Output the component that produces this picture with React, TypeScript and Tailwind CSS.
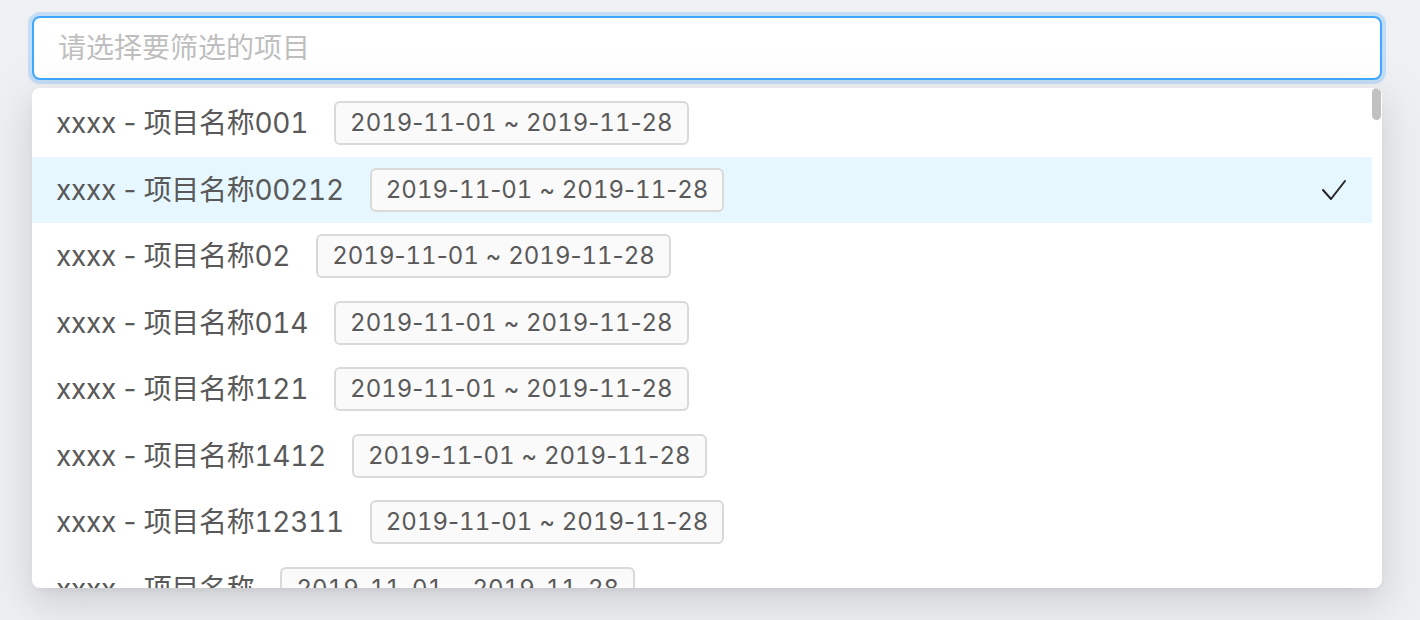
const items = [
  { name: "xxxx - 项目名称001", selected: false },
  { name: "xxxx - 项目名称00212", selected: true },
  { name: "xxxx - 项目名称02", selected: false },
  { name: "xxxx - 项目名称014", selected: false },
  { name: "xxxx - 项目名称121", selected: false },
  { name: "xxxx - 项目名称1412", selected: false },
  { name: "xxxx - 项目名称12311", selected: false },
  { name: "xxxx - 项目名称", selected: false },
];

const font = { fontFamily: 'Inter, "Noto Sans CJK SC", sans-serif' };

// digits in the shot are tabular, the rest is not
function Nums({ text }: { text: string }) {
  return (
    <span className="whitespace-pre">
      {text.split(/(\d+)/).map((part, i) =>
        /^\d+$/.test(part) ? (
          <span key={i} className="tabular-nums">{part}</span>
        ) : (
          <span key={i}>{part}</span>
        )
      )}
    </span>
  );
}

function CheckMark() {
  return (
    <svg width="26" height="22" viewBox="0 0 26 22" fill="none" className="ml-auto">
      <polyline
        points="2,11 10,20 24,2"
        stroke="#262626"
        strokeWidth="2"
        strokeLinecap="round"
        strokeLinejoin="round"
      />
    </svg>
  );
}

export default function App() {
  return (
    <div className="min-h-[620px] w-full bg-[#eff0f4] px-8 pt-4" style={font}>
      <div className="flex h-16 w-[1350px] items-center rounded-lg border-2 border-[#40a9ff] bg-white px-6 shadow-[0_0_0_4px_rgba(24,144,255,0.2)]">
        <span className="text-[28px] text-[#bfbfbf]">请选择要筛选的项目</span>
      </div>

      <div className="relative mt-2 h-[500px] w-[1350px] overflow-hidden rounded-lg bg-white shadow-[0_6px_12px_-8px_rgba(0,0,0,0.12),0_12px_32px_0_rgba(0,0,0,0.08),0_18px_56px_16px_rgba(0,0,0,0.05)]">
        <div className="pr-[10px] pt-[2px]">
          {items.map(it => (
            <div
              key={it.name}
              className={
                "flex h-[66.5px] items-center pl-6 pr-[25px] " +
                (it.selected ? "bg-[#e6f7ff]" : "")
              }
            >
              <span className="text-[28px] tracking-[-0.3px] text-[#595959]">
                <Nums text={it.name} />
              </span>
              <span className="ml-[26px] flex h-[44px] items-center rounded-md border-2 border-[#d9d9d9] bg-[#fafafa] px-[14px] text-[24px] text-[#595959]">
                <Nums text="2019-11-01 ~ 2019-11-28" />
              </span>
              {it.selected && <CheckMark />}
            </div>
          ))}
        </div>
        <div className="absolute right-[1px] top-0 h-8 w-[9px] rounded-full bg-[#c1c1c1]" />
      </div>
    </div>
  );
}
